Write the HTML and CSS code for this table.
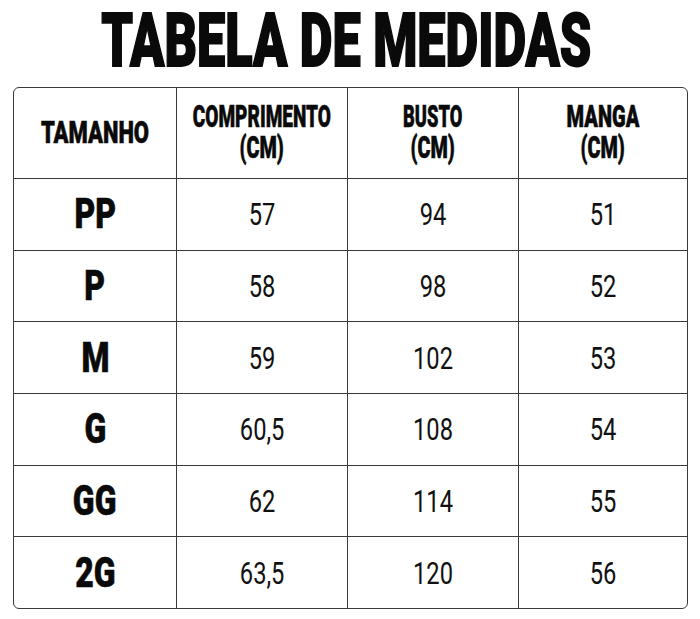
FILE: index.html
```html
<!DOCTYPE html>
<html lang="pt">
<head>
<meta charset="utf-8">
<title>Tabela de Medidas</title>
<link rel="stylesheet" href="styles.css">
</head>
<body>
<div class="page">
  <h1 class="title"><span class="title-text">TABELA DE MEDIDAS</span></h1>
  <div class="table">
    <div class="cell head first"><span class="h"><span class="ln w-tam">TAMANHO</span></span></div>
    <div class="cell head"><span class="h"><span class="ln w-comp">COMPRIMENTO</span><span class="ln w-cm">(CM)</span></span></div>
    <div class="cell head"><span class="h"><span class="ln w-bus">BUSTO</span><span class="ln w-cm">(CM)</span></span></div>
    <div class="cell head"><span class="h"><span class="ln w-man">MANGA</span><span class="ln w-cm">(CM)</span></span></div>

    <div class="cell row first"><span class="size">PP</span></div>
    <div class="cell row"><span class="num">57</span></div>
    <div class="cell row"><span class="num">94</span></div>
    <div class="cell row"><span class="num">51</span></div>

    <div class="cell row first"><span class="size">P</span></div>
    <div class="cell row"><span class="num">58</span></div>
    <div class="cell row"><span class="num">98</span></div>
    <div class="cell row"><span class="num">52</span></div>

    <div class="cell row first"><span class="size">M</span></div>
    <div class="cell row"><span class="num">59</span></div>
    <div class="cell row"><span class="num">102</span></div>
    <div class="cell row"><span class="num">53</span></div>

    <div class="cell row first"><span class="size">G</span></div>
    <div class="cell row"><span class="num">60,5</span></div>
    <div class="cell row"><span class="num">108</span></div>
    <div class="cell row"><span class="num">54</span></div>

    <div class="cell row first"><span class="size">GG</span></div>
    <div class="cell row"><span class="num">62</span></div>
    <div class="cell row"><span class="num">114</span></div>
    <div class="cell row"><span class="num">55</span></div>

    <div class="cell row first"><span class="size">2G</span></div>
    <div class="cell row"><span class="num">63,5</span></div>
    <div class="cell row"><span class="num">120</span></div>
    <div class="cell row"><span class="num">56</span></div>
  </div>
</div>
</body>
</html>
```

FILE: styles.css
```css
html, body {
  margin: 0;
  padding: 0;
  background: #ffffff;
}

.page {
  width: 700px;
  height: 619px;
  font-family: Roboto, "Liberation Sans", sans-serif;
  color: #111;
}

.title {
  margin: 0;
  height: 74px;
  padding-top: 13px;
  padding-right: 7px;
  display: flex;
  justify-content: center;
  align-items: flex-start;
  font-size: 56px;
  line-height: 56px;
  font-weight: 900;
  color: #0a0a0a;
}

.title-text {
  display: inline-block;
  white-space: nowrap;
  transform: scale(0.9, 1.33);
  -webkit-text-stroke: 1.4px #0a0a0a;
}

.table {
  margin-left: 13px;
  width: 675px;
  height: 522px;
  box-sizing: border-box;
  border: 1px solid #3a3a3a;
  border-radius: 6px;
  display: grid;
  grid-template-columns: 162px 171px 171px 1fr;
  grid-template-rows: 90px repeat(6, 1fr);
  overflow: hidden;
}

.cell {
  display: flex;
  align-items: center;
  justify-content: center;
  text-align: center;
  border-left: 1px solid #3a3a3a;
}

.cell.first {
  border-left: none;
}

.cell.row {
  border-top: 1px solid #3a3a3a;
}

.h {
  display: flex;
  flex-direction: column;
  align-items: center;
  font-size: 22px;
  line-height: 22px;
  font-weight: 900;
  transform: scaleY(1.41);
  color: #0a0a0a;
}

.ln {
  display: block;
  white-space: nowrap;
  -webkit-text-stroke: 0.4px #0a0a0a;
}

.w-tam { transform: scaleX(1.0); }
.w-comp { transform: scaleX(0.865); }
.w-bus { transform: scaleX(0.83); }
.w-man { transform: scaleX(0.91); }
.w-cm { transform: scaleX(0.9); }

.size {
  display: inline-block;
  font-size: 42px;
  line-height: 42px;
  font-weight: 900;
  transform: scaleX(0.76);
  -webkit-text-stroke: 0.6px #0a0a0a;
  color: #0a0a0a;
}

.num {
  display: inline-block;
  font-size: 32px;
  line-height: 32px;
  font-weight: 400;
  transform: scaleX(0.74);
}
```
